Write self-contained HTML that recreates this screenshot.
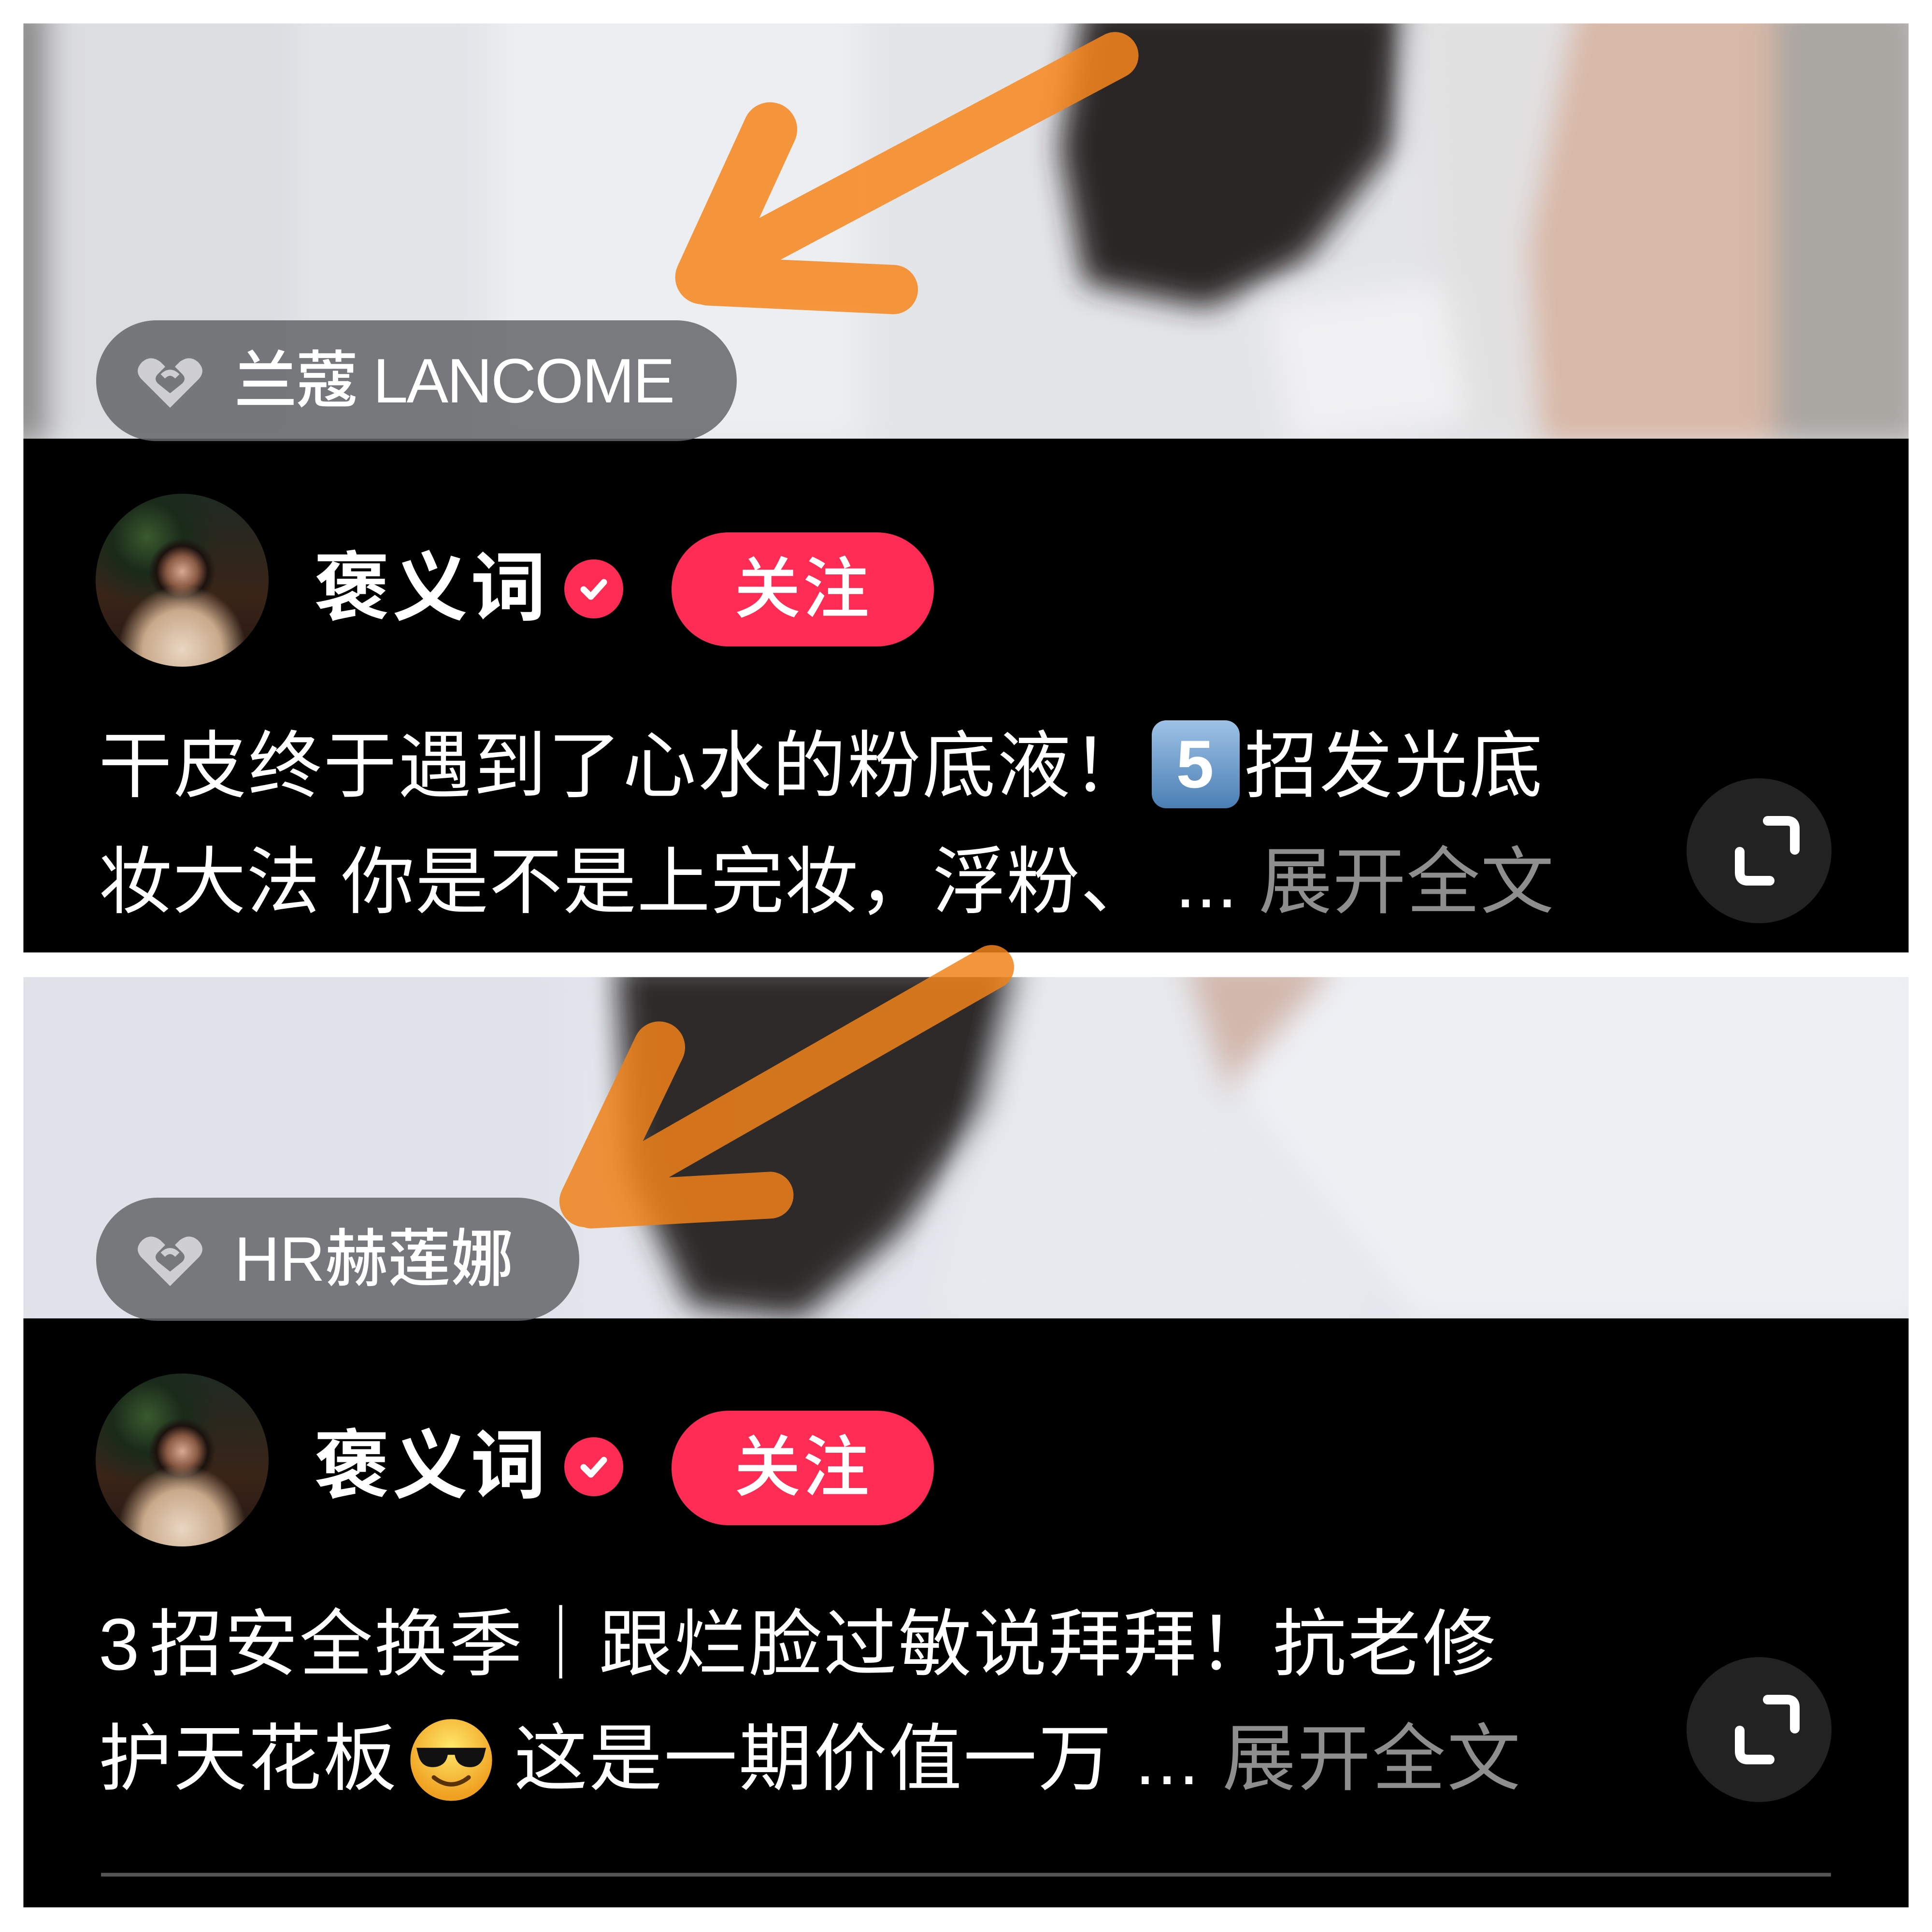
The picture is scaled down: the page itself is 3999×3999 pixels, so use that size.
<!DOCTYPE html>
<html><head><meta charset="utf-8">
<style>
html,body{margin:0;padding:0;background:#fff;}
body{width:3999px;height:3999px;position:relative;overflow:hidden;font-family:"Liberation Sans","Noto Sans CJK SC",sans-serif;}
.abs{position:absolute;}
.bg{position:absolute;left:0;top:0;width:3999px;height:3999px;}
.pill{position:absolute;background:rgba(100,101,104,0.85);border-radius:130px;color:#fff;font-size:130px;line-height:250px;white-space:nowrap;font-weight:500;}
.name{position:absolute;color:#fff;font-size:156px;font-weight:bold;line-height:200px;white-space:nowrap;letter-spacing:6px;}
.follow{position:absolute;background:#fe2c55;border-radius:120px;color:#fff;font-size:138px;text-align:center;line-height:236px;font-weight:500;letter-spacing:4px;}
.badge{position:absolute;width:122px;height:122px;border-radius:50%;background:#fe2c55;}
.cap{position:absolute;color:#fff;font-size:152px;line-height:200px;white-space:nowrap;letter-spacing:3px;}
.gray{color:#8e8e8e;}
.exp{position:absolute;width:300px;height:300px;border-radius:50%;background:#222;}
.av{position:absolute;width:358px;height:358px;border-radius:50%;overflow:hidden;}
</style></head><body>

<svg class="bg" viewBox="0 0 1568 1568" preserveAspectRatio="none">
<defs>
<filter id="bl" x="-20%" y="-20%" width="140%" height="140%"><feGaussianBlur stdDeviation="12"/></filter>
<clipPath id="c1"><rect x="19" y="19" width="1530" height="337"/></clipPath>
<clipPath id="c2"><rect x="19" y="793" width="1530" height="277"/></clipPath>
</defs>
<g clip-path="url(#c1)">
<rect x="19" y="19" width="1530" height="337" fill="#e4e5e9"/>
<g filter="url(#bl)">
<rect x="0" y="0" width="40" height="360" fill="#8c8b8b"/>
<rect x="40" y="0" width="200" height="360" fill="#dcdde1"/>
<rect x="400" y="0" width="300" height="360" fill="#eceef1"/>
<path d="M880 0 L1140 0 L1130 120 L1060 210 L980 250 L880 230 L860 120 Z" fill="#2a2626"/>
<path d="M1150 0 L1450 0 L1440 360 L1170 360 L1160 200 Z" fill="#e2e1e2"/>
<path d="M1280 0 L1440 0 L1440 360 L1250 360 L1240 200 Z" fill="#d8b8a6"/>
<rect x="1440" y="0" width="120" height="360" fill="#a9a6a2"/>
<path d="M1030 250 L1170 230 L1190 340 L1050 360 Z" fill="#f1f1f3"/>
</g>
</g>
<rect x="19" y="356" width="1530" height="417" fill="#000"/>
<g clip-path="url(#c2)">
<rect x="19" y="793" width="1530" height="277" fill="#e3e6ec"/>
<g filter="url(#bl)">
<rect x="0" y="780" width="460" height="300" fill="#dfe2e8"/>
<path d="M500 780 L830 780 L800 900 L730 1000 L650 1070 L560 1060 L510 950 Z" fill="#2f2b2c"/>
<path d="M960 780 L1080 780 L1060 860 L1000 890 L960 850 Z" fill="#d2b7ab"/>
<path d="M1000 880 L1150 1070 L1560 1070 L1560 780 L1090 780 Z" fill="#eef0f4"/>
<path d="M830 780 L960 780 L1000 900 L1120 1070 L760 1070 Z" fill="#e7e9ee"/>
</g>
</g>
<rect x="19" y="1070" width="1530" height="478" fill="#000"/>
<rect x="82" y="1520" width="1404" height="3" fill="#555"/>
<g fill="none" stroke="#f7861c" stroke-linecap="round" stroke-linejoin="round" opacity="0.85">
<path d="M905 45 L585 215" stroke-width="38"/>
<path d="M625 105 L570 225" stroke-width="44"/>
<path d="M575 228 L725 235" stroke-width="40"/>
</g>
<g fill="none" stroke="#f0821a" stroke-linecap="round" stroke-linejoin="round" opacity="0.85">
<path d="M805 785 L490 965" stroke-width="36"/>
<path d="M535 850 L475 975" stroke-width="42"/>
<path d="M480 978 L625 970" stroke-width="38"/>
</g>
</svg>

<div class="pill" style="left:199px;top:663px;width:1326px;height:250px;">
<svg class="abs" style="left:78px;top:66px" width="150" height="120" viewBox="0 0 60 48"><path d="M30 46 L6 22 Q0 15 7 8 Q14 2 22 8 L26 12 L20 18 Q16 22 20 26 L30 34 L40 26 Q44 22 40 18 L34 12 L38 8 Q46 2 53 8 Q60 15 54 22 Z" fill="#cfcfd1"/><path d="M24 20 Q30 14 36 20" stroke="#cfcfd1" stroke-width="5" fill="none"/></svg>
<span class="abs" style="left:286px;top:0;letter-spacing:-3px">兰蔻 LANCOME</span>
</div>
<div class="av" style="left:198px;top:1022px;background:radial-gradient(circle at 50% 90%,#e9d6c2 0,#c9a98a 22%,transparent 36%),radial-gradient(circle at 50% 45%,#d8a890 0,#8a5a44 12%,#1b120e 20%,transparent 26%),radial-gradient(circle at 30% 25%,#3a5a2e 0,#1a2a1a 20%,transparent 40%),linear-gradient(#1e2a22,#3a2418 60%,#221612);"></div>
<div class="name" style="left:650px;top:1118px;">褒义词</div>
<div class="badge" style="left:1168px;top:1158px;"><svg width="122" height="122" viewBox="0 0 122 122"><path d="M40 62 L55 77 L82 47" stroke="#fff" stroke-width="13" fill="none" stroke-linecap="round" stroke-linejoin="round"/></svg></div>
<div class="follow" style="left:1390px;top:1102px;width:543px;height:236px;">关注</div>
<div class="cap" style="left:204px;top:1486px;">干皮终于遇到了心水的粉底液！<span style="display:inline-block;width:182px;height:182px;vertical-align:8px;margin:0 10px;border-radius:30px;background:linear-gradient(#9ec2e6,#4a7fb4);color:#fff;text-align:center;font-weight:bold;font-size:140px;line-height:182px;">5</span>招发光底</div>
<div class="cap" style="left:204px;top:1726px;letter-spacing:1px">妆大法 你是不是上完妆，浮粉、 ... <span class="gray">展开全文</span></div>
<div class="exp" style="left:3491px;top:1611px;"><svg width="300" height="300" viewBox="0 0 300 300"><path d="M110 152 L110 195 Q110 212 127 212 L172 212 M168 88 L208 88 Q224 88 224 104 L224 148" stroke="#fff" stroke-width="20" fill="none" stroke-linecap="round"/></svg></div>

<div class="pill" style="left:199px;top:2479px;width:1000px;height:255px;">
<svg class="abs" style="left:78px;top:68px" width="150" height="120" viewBox="0 0 60 48"><path d="M30 46 L6 22 Q0 15 7 8 Q14 2 22 8 L26 12 L20 18 Q16 22 20 26 L30 34 L40 26 Q44 22 40 18 L34 12 L38 8 Q46 2 53 8 Q60 15 54 22 Z" fill="#cfcfd1"/><path d="M24 20 Q30 14 36 20" stroke="#cfcfd1" stroke-width="5" fill="none"/></svg>
<span class="abs" style="left:286px;top:2px">HR赫莲娜</span>
</div>
<div class="av" style="left:198px;top:2843px;background:radial-gradient(circle at 50% 90%,#e9d6c2 0,#c9a98a 22%,transparent 36%),radial-gradient(circle at 50% 45%,#d8a890 0,#8a5a44 12%,#1b120e 20%,transparent 26%),radial-gradient(circle at 30% 25%,#3a5a2e 0,#1a2a1a 20%,transparent 40%),linear-gradient(#1e2a22,#3a2418 60%,#221612);"></div>
<div class="name" style="left:650px;top:2935px;">褒义词</div>
<div class="badge" style="left:1168px;top:2975px;"><svg width="122" height="122" viewBox="0 0 122 122"><path d="M40 62 L55 77 L82 47" stroke="#fff" stroke-width="13" fill="none" stroke-linecap="round" stroke-linejoin="round"/></svg></div>
<div class="follow" style="left:1390px;top:2920px;width:543px;height:237px;">关注</div>
<div class="cap" style="left:204px;top:3304px;"><span style="margin-right:18px">3</span>招安全换季｜跟烂脸过敏说拜拜！抗老修</div>
<div class="cap" style="left:204px;top:3541px;">护天花板<svg style="vertical-align:-40px;margin:0 40px 0 20px" width="180" height="180" viewBox="0 0 100 100"><defs><radialGradient id="fy" cx="50%" cy="35%" r="60%"><stop offset="0" stop-color="#ffe86a"/><stop offset="1" stop-color="#f0a020"/></radialGradient></defs><circle cx="50" cy="50" r="47" fill="url(#fy)"/><path d="M10 36 L90 36 L88 44 Q84 60 68 58 Q56 56 54 44 L46 44 Q44 56 32 58 Q16 60 12 44 Z" fill="#111"/><path d="M30 70 Q50 86 70 70" stroke="#5a3208" stroke-width="5" fill="none" stroke-linecap="round"/></svg>这是一期价值一万 ... <span class="gray">展开全文</span></div>
<div class="exp" style="left:3491px;top:3430px;"><svg width="300" height="300" viewBox="0 0 300 300"><path d="M110 152 L110 195 Q110 212 127 212 L172 212 M168 88 L208 88 Q224 88 224 104 L224 148" stroke="#fff" stroke-width="20" fill="none" stroke-linecap="round"/></svg></div>

</body></html>
